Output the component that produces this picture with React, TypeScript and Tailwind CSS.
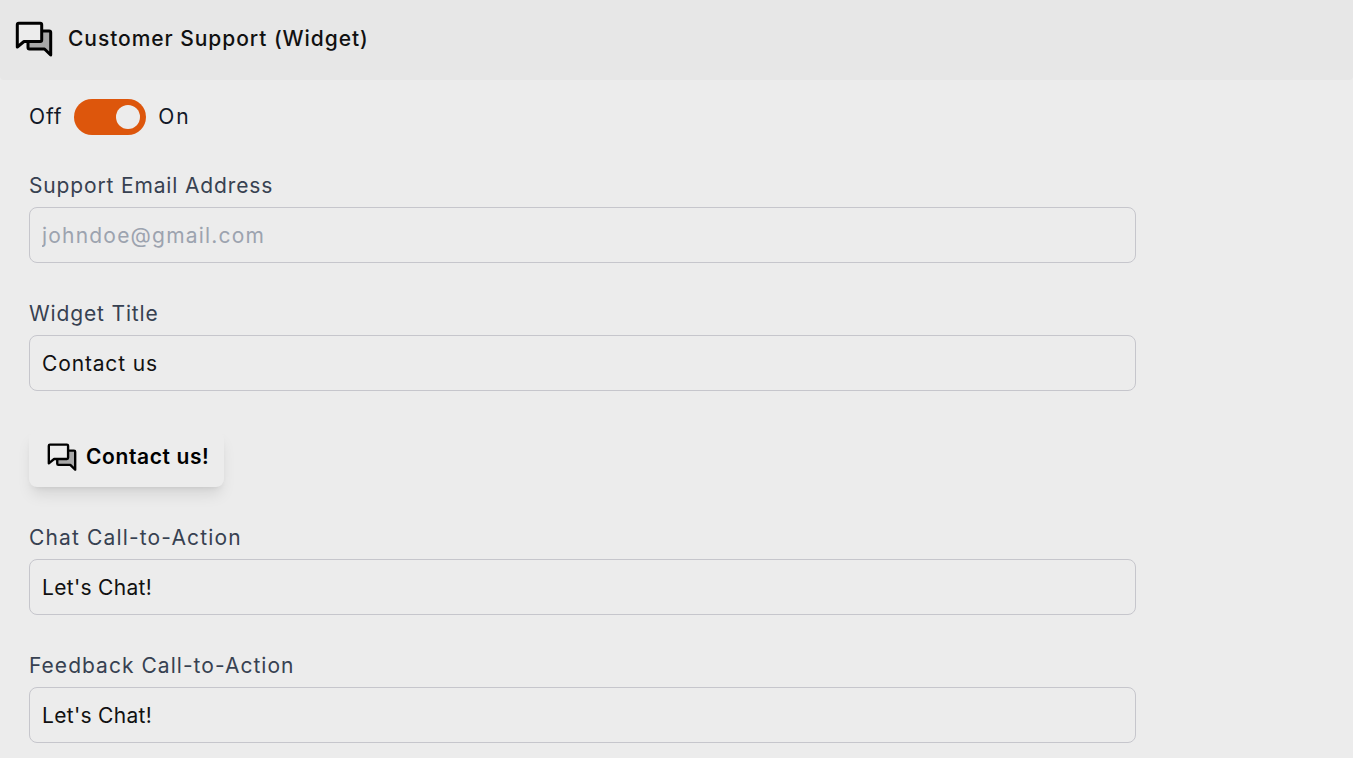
const font = "font-['Inter',sans-serif]";

function ChatIcon({ className }: { className: string }) {
  return (
    <svg viewBox="0 0 38 38" className={className} stroke="#000" strokeWidth="3" strokeLinejoin="round">
      <path d="M20 11h14.200a1.500 1.500 0 0 1 1.500 1.500V35l-6.200-6H14.500a1.500 1.500 0 0 1-1.500-1.500V20z" className="fill-[#a8a8a8]" />
      <path d="M3.800 3.300h21.400a1.500 1.500 0 0 1 1.500 1.500v15.200a1.500 1.500 0 0 1-1.500 1.500H9l-6.700 5.500V4.800a1.500 1.500 0 0 1 1.500-1.500z" className="fill-[#ececec]" />
    </svg>
  );
}

function Field({
  label,
  value,
  placeholder,
  labelTracking,
  inputTracking,
}: {
  label: string;
  value?: string;
  placeholder?: string;
  labelTracking: string;
  inputTracking: string;
}) {
  return (
    <div className="flex flex-col">
      <label className={`pt-px text-[21px] leading-[29px] text-[#374151] ${labelTracking}`}>{label}</label>
      <input
        readOnly
        value={value}
        placeholder={placeholder}
        className={`mt-[7px] h-14 w-[1107px] rounded-lg border border-[#c6c6cc] bg-transparent px-[12px] text-[21px] text-[#111] placeholder:text-[#9ca3af] outline-none ${inputTracking}`}
      />
    </div>
  );
}

export default function App() {
  return (
    <div className={`h-[758px] overflow-hidden bg-[#ececec] ${font}`}>
      <div className="flex h-20 items-center gap-[15px] rounded-b bg-[#e7e7e7] pb-[3px] pl-[15px]">
        <ChatIcon className="h-[38px] w-[38px]" />
        <span className="text-[21px] font-medium tracking-[0.95px] text-[#111]">Customer Support (Widget)</span>
      </div>

      <div className="flex flex-col px-[29px]">
        <div className="mt-[19px] flex items-center gap-3 text-[21px] tracking-[0.85px] text-[#111827]">
          <span>Off</span>
          <div className="flex h-9 w-[72px] items-center justify-end rounded-full bg-[#dd560c] pr-[6px]">
            <div className="h-6 w-6 rounded-full bg-[#ececec]" />
          </div>
          <span className="tracking-[1.8px]">On</span>
        </div>

        <div className="mt-[35px]">
          <Field
            label="Support Email Address"
            placeholder="johndoe@gmail.com"
            labelTracking="tracking-[0.85px]"
            inputTracking="tracking-[1.2px]"
          />
        </div>
        <div className="mt-[35px]">
          <Field label="Widget Title" value="Contact us" labelTracking="tracking-[0.85px]" inputTracking="tracking-[0.85px]" />
        </div>

        <div className="mt-[39px] flex h-[57px] w-[195px] items-center gap-[9px] rounded-lg bg-[#ececec] pb-[3px] pl-[18px] shadow-lg">
          <ChatIcon className="h-[30px] w-[30px]" />
          <span className="text-[21px] font-semibold tracking-[0.6px] text-black">Contact us!</span>
        </div>

        <div className="mt-[35px]">
          <Field label="Chat Call-to-Action" value="Let's Chat!" labelTracking="tracking-[1.15px]" inputTracking="tracking-[0.3px]" />
        </div>
        <div className="mt-[35px]">
          <Field label="Feedback Call-to-Action" value="Let's Chat!" labelTracking="tracking-[1.03px]" inputTracking="tracking-[0.3px]" />
        </div>
      </div>
    </div>
  );
}
